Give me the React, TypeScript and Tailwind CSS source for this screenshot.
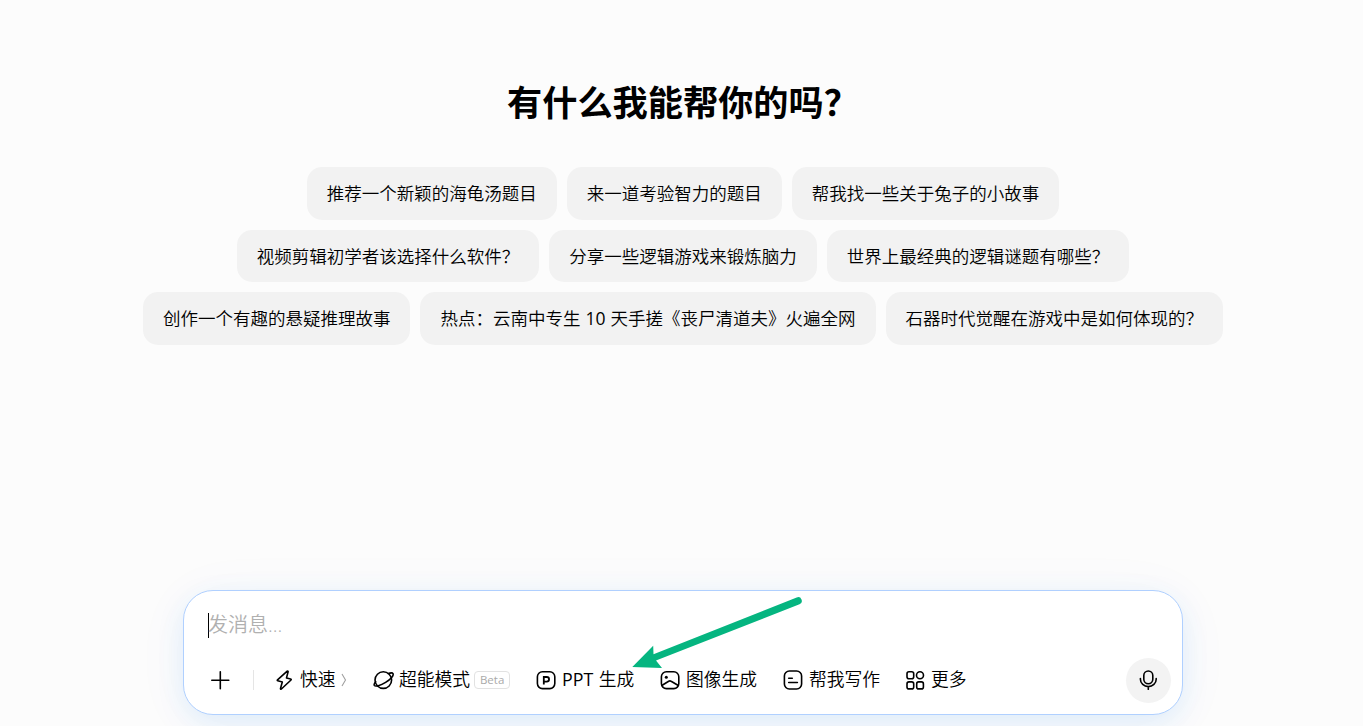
import React from 'react';

const suggestionRows: string[][] = [
  ['推荐一个新颖的海龟汤题目', '来一道考验智力的题目', '帮我找一些关于兔子的小故事'],
  ['视频剪辑初学者该选择什么软件？', '分享一些逻辑游戏来锻炼脑力', '世界上最经典的逻辑谜题有哪些？'],
  ['创作一个有趣的悬疑推理故事', '热点：云南中专生 10 天手搓《丧尸清道夫》火遍全网', '石器时代觉醒在游戏中是如何体现的？'],
];

// Latin letters and digits need a heavier weight than the Chinese text around them
const MixedText: React.FC<{ text: string }> = ({ text }) => (
  <>
    {text.split(/([A-Za-z0-9]+)/).map((part, index) =>
      index % 2 === 1 ? (
        <span key={index} className="font-normal">
          {part}
        </span>
      ) : (
        part
      )
    )}
  </>
);

interface IconProps {
  children: React.ReactNode;
}

const Icon: React.FC<IconProps> = ({ children }) => (
  <svg
    className="w-5 h-5 shrink-0"
    viewBox="0 0 20 20"
    fill="none"
    stroke="currentColor"
    strokeWidth="1.6"
    strokeLinecap="round"
    strokeLinejoin="round"
  >
    {children}
  </svg>
);

const PlusIcon = () => (
  <Icon>
    <path d="M1.8 10.3h17M10.3 1.8v17" />
  </Icon>
);

const BoltIcon = () => (
  <Icon>
    <path d="M13.2 1.2 3.5 9.8c-.4.4-.2.9.3 1l4.5 1.2-1.8 6.5c-.1.7.5.9.9.5l9.6-9c.4-.4.2-.9-.3-1l-4.2-1.1 1.6-6.1c.1-.7-.4-1-.9-.6Z" />
  </Icon>
);

const PlanetIcon = () => (
  <svg
    className="w-[21px] h-5 shrink-0 -mr-px"
    viewBox="0 0 21 20"
    fill="none"
    stroke="currentColor"
    strokeWidth="1.6"
    strokeLinecap="round"
  >
    <circle cx="10.3" cy="10.1" r="8.3" />
    <path d="M15.3 3.5c2.5-.8 4.3-.7 4.7.2.9 1.7-2 5.5-7.4 8.7-5.2 3.2-10.3 4.5-11.300 3-.5-.8.2-2.300 1.300-3.700" />
  </svg>
);

const PptIcon = () => (
  <Icon>
    <rect x="1.4" y="1.8" width="17.4" height="16.8" rx="5" />
    <path
      d="M7.8 14.600V7h2.900a2.300 2.300 0 0 1 0 4.700H8"
      strokeWidth="1.8"
      strokeLinecap="butt"
      strokeLinejoin="miter"
    />
  </Icon>
);

const ImageIcon = () => (
  <Icon>
    <rect x="1.4" y="1.8" width="17.4" height="16.8" rx="5" />
    <circle cx="6.3" cy="7.3" r="1.5" fill="currentColor" stroke="none" />
    <path d="M2.2 15.2 8.7 11.2c.8-.5 1.6-.5 2.4 0l6.8 4" />
  </Icon>
);

const WriteIcon = () => (
  <Icon>
    <rect x="1.4" y="1" width="17.2" height="18" rx="5" />
    <path d="M5.7 8.3h3.6M5.7 12.5h8.7" />
  </Icon>
);

const MoreIcon = () => (
  <Icon>
    <rect x="2" y="1.8" width="6.7" height="7" rx="2" />
    <circle cx="15" cy="5.3" r="3.5" />
    <rect x="2" y="11.9" width="6.7" height="7" rx="2" />
    <rect x="11.7" y="11.9" width="6.7" height="7" rx="2" />
  </Icon>
);

const MicIcon = () => (
  <Icon>
    <rect x="4.8" y="1" width="9" height="12.8" rx="4.5" />
    <path d="M1.4 8.5v.7a7.9 7.4 0 0 0 15.8 0v-.7M9.3 16.8v2.5" />
  </Icon>
);

interface ToolButtonProps {
  icon: React.ReactNode;
  label: string;
  className: string;
  children?: React.ReactNode;
}

const ToolButton: React.FC<ToolButtonProps> = ({ icon, label, className, children }) => (
  <button className={`flex items-center shrink-0 whitespace-nowrap ${className}`}>
    {icon}
    <span className="ml-1.5 pb-0.5">
      <MixedText text={label} />
    </span>
    {children}
  </button>
);

const ChatInput = () => (
  <div className="relative flex flex-col w-[1000px] h-[125px] rounded-[30px] border border-[#b0d0ff] bg-white shadow-[0_6px_60px_rgba(0,110,220,0.04),0_8px_28px_rgba(0,130,240,0.10)]">
    <div className="flex items-center h-[67px] pl-6 pt-[2px] text-[20px] leading-6 text-[#b0b0b0]">
      <span className="w-px h-[25px] bg-black" />
      <span className="-ml-px">发消息...</span>
    </div>

    <div className="flex items-center h-[45px] text-[17.8px] leading-6">
      <button className="ml-[26px]">
        <PlusIcon />
      </button>
      <span className="ml-[23px] w-px h-5 bg-[#e5e5e5]" />
      <ToolButton icon={<BoltIcon />} label="快速" className="ml-5 w-[99px]">
        <svg className="ml-[5px] w-[6px] h-[16px]" viewBox="0 0 6 16" fill="none" stroke="#a0a0a0" strokeWidth="1.1">
          <path d="M1 2l3.5 6L1 14" />
        </svg>
      </ToolButton>
      <ToolButton icon={<PlanetIcon />} label="超能模式" className="w-[163px]">
        <span className="flex items-center justify-center ml-1 w-9 h-[18px] rounded-[4px] border border-[#e2e2e2] text-[11.5px] font-normal text-[#aaaaaa]">
          Beta
        </span>
      </ToolButton>
      <ToolButton icon={<PptIcon />} label="PPT 生成" className="w-[124px] [word-spacing:1px]" />
      <ToolButton icon={<ImageIcon />} label="图像生成" className="w-[123px]" />
      <ToolButton icon={<WriteIcon />} label="帮我写作" className="w-[122px]" />
      <ToolButton icon={<MoreIcon />} label="更多" className="w-[66px]" />
      <button className="flex items-center justify-center ml-auto mr-[11px] w-[45px] h-[45px] rounded-full bg-[#f3f3f3]">
        <MicIcon />
      </button>
    </div>
  </div>
);

// Green pointer towards the PPT button
const PointerArrow = () => (
  <svg className="absolute left-[630px] top-[594px] w-[176px] h-[78px] pointer-events-none" viewBox="630 594 176 78">
    <path
      d="M632.3 667 653.2 645.7 653.5 654.2 796.7 597.5A3.6 3.6 0 0 1 799.5 604.3L656 660.5 662 668Z"
      fill="#05b580"
    />
  </svg>
);

export default function App() {
  return (
    <div className="relative flex flex-col items-center w-full h-[726px] pl-[3px] overflow-hidden bg-[#fcfcfc] text-black font-[350] font-['Open_Sans','Noto_Sans_CJK_SC',sans-serif]">
      <h1 className="mt-[79px] h-[48px] text-[35.2px] leading-[47px] font-bold">有什么我能帮你的吗？</h1>

      <div className="flex flex-col items-center gap-[10px] mt-10">
        {suggestionRows.map((row, index) => (
          <div key={index} className="flex gap-[10px]">
            {row.map((text) => (
              <button
                key={text}
                className="h-[52.5px] px-5 rounded-[15px] bg-[#f2f2f2] text-[17.5px] leading-[26px] [word-spacing:0.5px] whitespace-nowrap"
              >
                <MixedText text={text} />
              </button>
            ))}
          </div>
        ))}
      </div>

      <div className="mt-[245px] shrink-0">
        <ChatInput />
      </div>

      <PointerArrow />
    </div>
  );
}
